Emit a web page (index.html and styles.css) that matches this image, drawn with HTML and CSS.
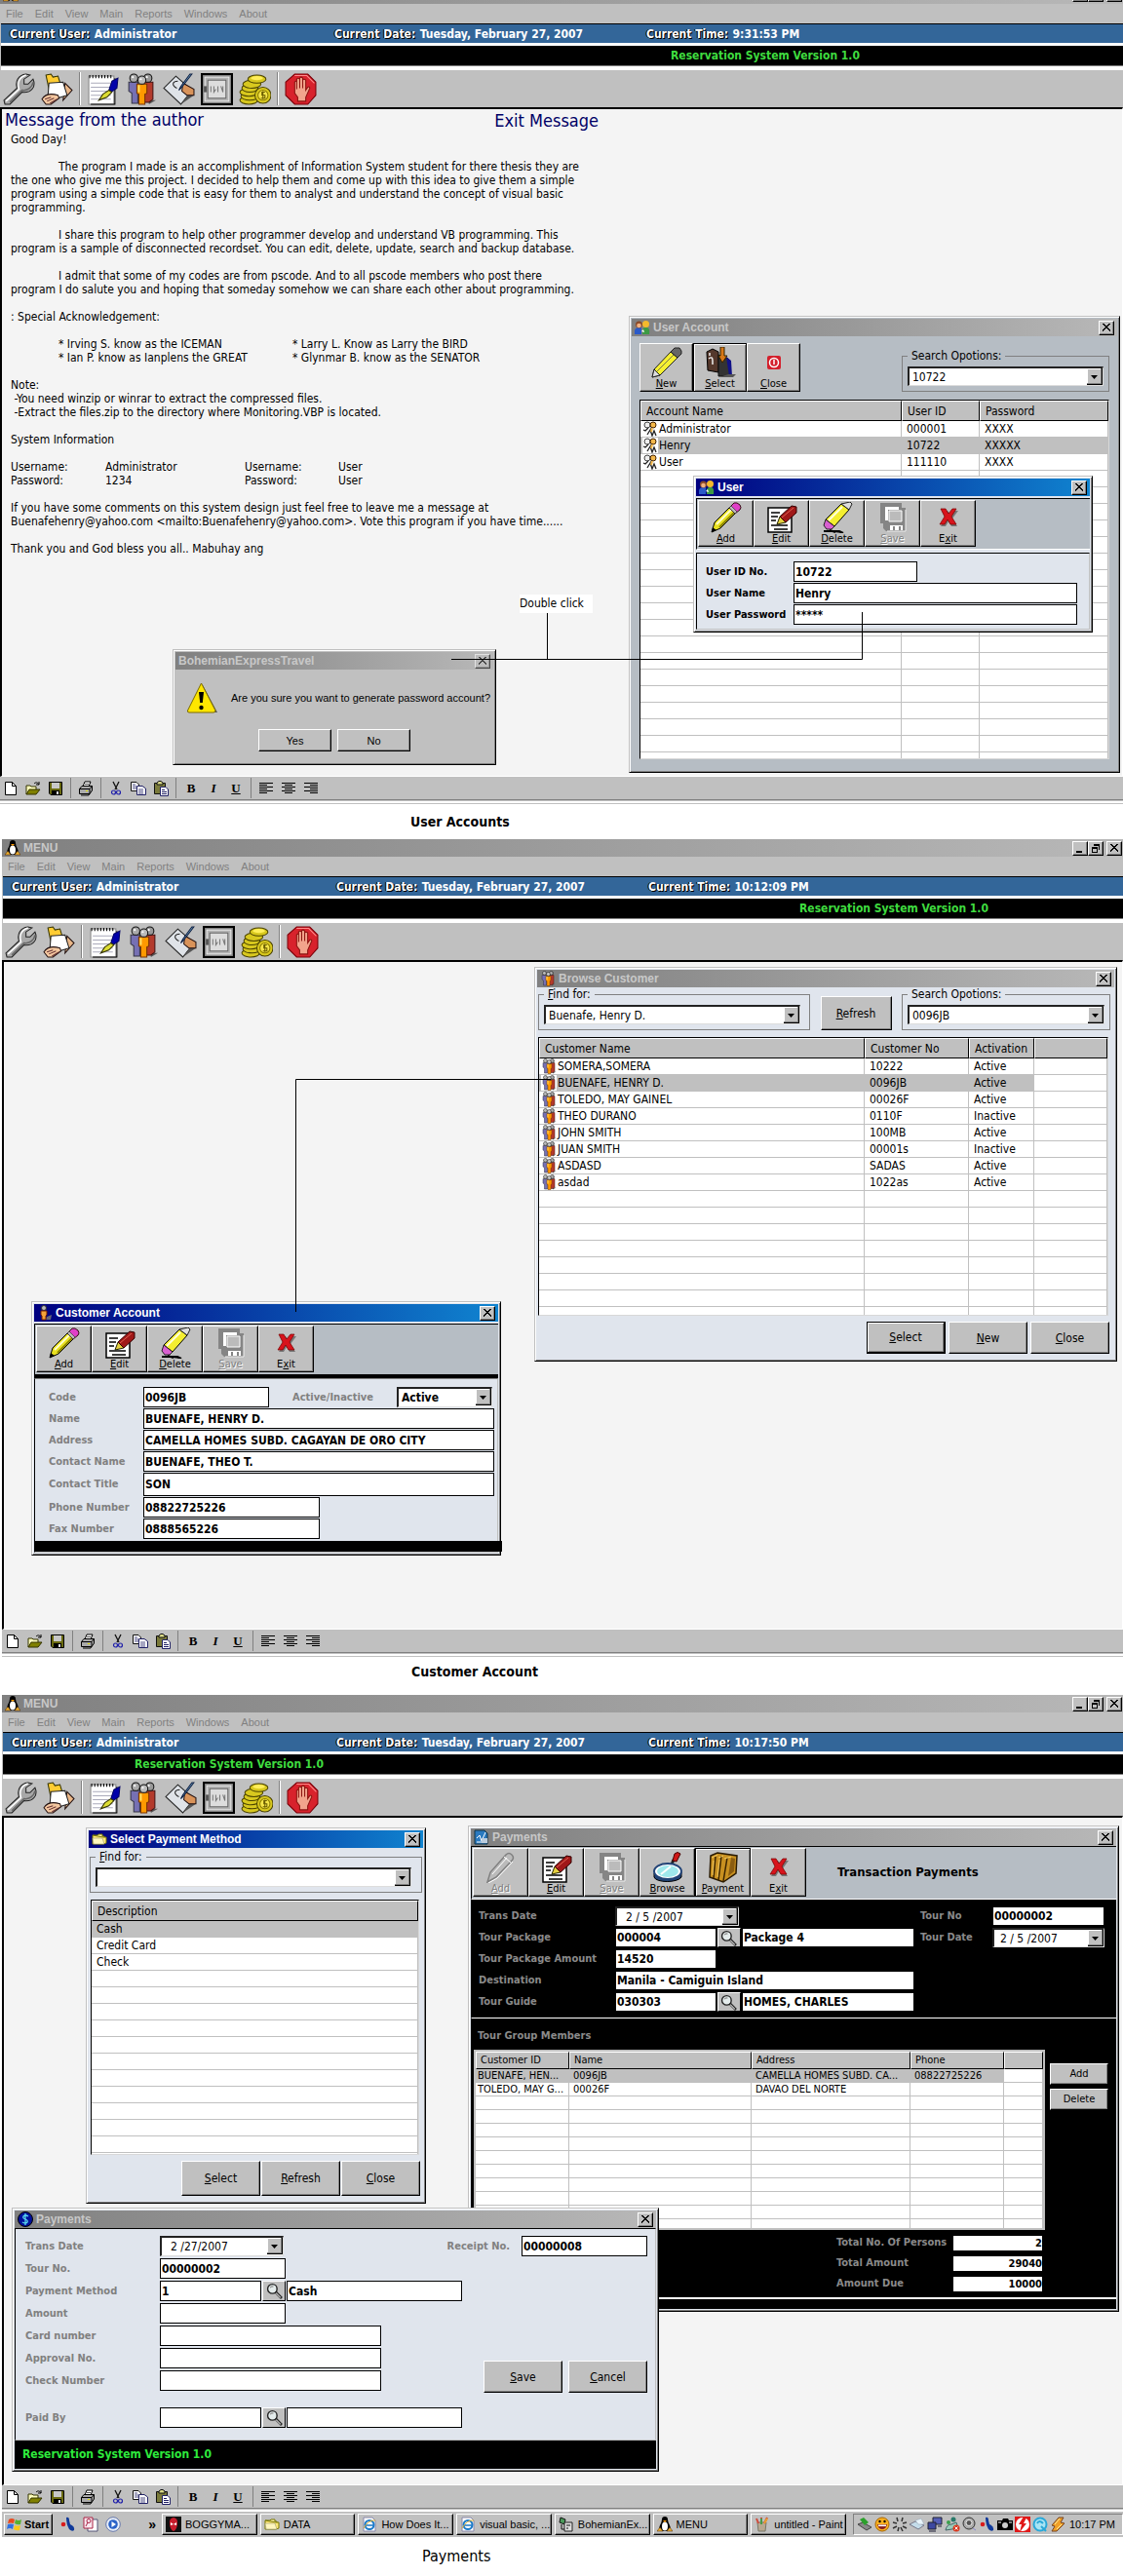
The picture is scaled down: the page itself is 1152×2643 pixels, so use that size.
FILE: index.html
```html
<!DOCTYPE html>
<html lang="en">
<head>
<meta charset="utf-8">
<title>Reservation System Version 1.0</title>
<link rel="stylesheet" href="styles.css">
</head>
<body>
<svg class="sprite" aria-hidden="true">
  <symbol id="i-wrench" viewBox="0 0 32 32"><path d="M2 31L1 27L14 15C12 8 15 2 23 1L27 2L21 6L21 11L25 11L30 6C33 13 29 20 19 19L7 31Z" fill="#a8a8a8" stroke="#222"/><path d="M3 28L16 16C14 9 17 4 23 2" fill="none" stroke="#fff" stroke-width="1.5"/><path d="M7 29L19 17C25 18 29 14 30 9" fill="none" stroke="#666" stroke-width="1.5"/></symbol>
  <symbol id="i-share" viewBox="0 0 32 32"><path d="M5 2L10 1L12 4L17 3L21 16L9 21Z" fill="#fc3" stroke="#330"/><path d="M24 10L31 17L22 27Z" fill="#eab788" stroke="#211"/><path d="M8 10L22 9L26 22L13 26L7 22Z" fill="#fff" stroke="#222"/><path d="M1 26C4 21 10 20 17 22L18 25L10 31H5Z" fill="#f5c8a0" stroke="#211"/><path d="M4 26L10 24M6 28L13 25M9 30L16 26" stroke="#633" fill="none"/></symbol>
  <symbol id="i-notes" viewBox="0 0 32 32"><path d="M2 3H27V31H2Z" fill="#fff" stroke="#888"/><path d="M28 5V31H4" fill="none" stroke="#000"/><path d="M3 2V5M6 2V5M9 2V5M12 2V5M15 2V5M18 2V5M21 2V5M24 2V5" stroke="#000"/><path d="M4 10H24M4 14H24M4 18H24M4 22H24M4 26H24" stroke="#aab"/><path d="M25 8L31 5L30 15L24 19L22 17Z" fill="#00a" stroke="#006"/><path d="M22 17L25 19L20 24L12 27L16 21Z" fill="#dd3" stroke="#330"/></symbol>
  <symbol id="i-people" viewBox="0 0 32 32"><path d="M24 27L31 27L24 31Z" fill="#555"/><path d="M4 9H13V30H7V20L4 18Z" fill="#7670b4" stroke="#334"/><path d="M19 9H28V26L24 29H19Z" fill="#b33a2c" stroke="#411"/><path d="M12 11H22V20L20 21V31H14V21L12 20Z" fill="#f90" stroke="#730"/><path d="M14 12V19" stroke="#fd6" stroke-width="2"/><circle cx="9" cy="5" r="4" fill="#aaa" stroke="#111"/><circle cx="23" cy="5" r="4" fill="#999" stroke="#111"/><circle cx="17" cy="7" r="4" fill="#bbb" stroke="#111"/><circle cx="8" cy="4" r="1" fill="#fff"/><circle cx="16" cy="6" r="1" fill="#fff"/><circle cx="22" cy="4" r="1" fill="#fff"/></symbol>
  <symbol id="i-write" viewBox="0 0 32 32"><path d="M13 3L29 17L18 31L1 15Z" fill="#dfe3e8" stroke="#222"/><path d="M18 31L31 22L29 17Z" fill="#555"/><path d="M15 8C10 8 8 12 14 15" stroke="#222" fill="none"/><path d="M20 10L31 16V22H24L19 18Z" fill="#d9935a" stroke="#211"/><path d="M29 1L19 14L16 17L18 13L27 1Z" fill="#6fa0c8" stroke="#124"/></symbol>
  <symbol id="i-safe" viewBox="0 0 32 32"><rect x="1" y="1" width="30" height="30" fill="#8d8d8d" stroke="#000" stroke-width="2"/><rect x="4" y="4" width="24" height="24" fill="#b4b4b4" stroke="#eee"/><rect x="7" y="7" width="18" height="18" fill="#ddd" stroke="#666"/><path d="M3 13H6V19H3Z" fill="#555"/><path d="M10 13V19M13 13V19L15 16M17 13V19M20 13L22 19V13" stroke="#777" fill="none"/></symbol>
  <symbol id="i-coins" viewBox="0 0 32 32"><g fill="#d8c81e" stroke="#4a4200"><ellipse cx="10" cy="27" rx="9" ry="4"/><ellipse cx="11" cy="23" rx="9" ry="4"/><ellipse cx="10" cy="19" rx="9" ry="4"/><ellipse cx="11" cy="15" rx="8" ry="4"/><ellipse cx="13" cy="11" rx="9" ry="4"/><ellipse cx="18" cy="6" rx="9" ry="4"/><circle cx="24" cy="22" r="8"/></g><ellipse cx="18" cy="5" rx="6" ry="2" fill="#ffee5a"/><circle cx="24" cy="22" r="5" fill="#f5e54a" stroke="#8a7a00"/><path d="M26 19H23V22H26V25H22M24 18V26" stroke="#6a5c00" fill="none"/></symbol>
  <symbol id="i-stop" viewBox="0 0 32 32"><path d="M10 1H23L31 9V22L23 31H10L1 22V9Z" fill="#d8222c" stroke="#7a0008"/><path d="M10 2.500H22L29.500 10" fill="none" stroke="#f88"/><path d="M10 18V9Q11 7 12 9V16V6Q13 4 15 6V15V5Q16 3 18 5V15V7Q19 5 21 7V17L23 14Q25 13 25 15L21 24V28H13V24L10 20Z" fill="#f2a48c" stroke="#8a1410"/></symbol>

  <symbol id="i-new" viewBox="0 0 16 16"><path d="M2.500 1.500H9.500L13.500 5.500V14.500H2.500Z" fill="#fff" stroke="#000"/><path d="M9.500 1.500V5.500H13.500" fill="none" stroke="#000"/></symbol>
  <symbol id="i-open" viewBox="0 0 16 16"><path d="M1 14V5H5L6 6H11V9" fill="#ffb" stroke="#330"/><path d="M1 14L4 9H15L11 14Z" fill="#808000" stroke="#330"/><path d="M9 3C11 1 13 2 14 4M14 1V4H11" fill="none" stroke="#000"/></symbol>
  <symbol id="i-save" viewBox="0 0 16 16"><path d="M1.500 1.500H14.500V14.500H3L1.500 13Z" fill="#6a6a10" stroke="#000"/><path d="M4 2H12V8H4Z" fill="#c8c8c8"/><path d="M4 10H12V14H4Z" fill="#000"/><path d="M9 11H11V14H9Z" fill="#ddd"/></symbol>
  <symbol id="i-print" viewBox="0 0 16 16"><path d="M5 6L7 1H13L11 6" fill="#fff" stroke="#000"/><path d="M1.500 8.500L4 5.500H14.500V10L12 13.500H1.500Z" fill="#aaa" stroke="#000"/><path d="M1.500 8.500H12V13.500M12 8.500L14.500 5.500M3 15H11L12 13" fill="none" stroke="#000"/><path d="M7 3.500H11" stroke="#555"/><path d="M8 10.500H10" stroke="#dd0"/></symbol>
  <symbol id="i-cut" viewBox="0 0 16 16"><path d="M5 1L9 9M11 1L7 9" stroke="#111" stroke-width="1.300"/><circle cx="5.500" cy="12" r="2" fill="none" stroke="#22a" stroke-width="1.200"/><circle cx="10.500" cy="12" r="2" fill="none" stroke="#22a" stroke-width="1.200"/></symbol>
  <symbol id="i-copy" viewBox="0 0 16 16"><path d="M.5 1.500H6L8.500 4V10.500H.5Z" fill="#fff" stroke="#111"/><path d="M6.500 5.500H12L15.500 8V14.500H6.500Z" fill="#fff" stroke="#226"/><path d="M2 4H5M2 6H6M2 8H6M8 9H13M8 11H13M8 13H13" stroke="#226" stroke-width=".8"/></symbol>
  <symbol id="i-paste" viewBox="0 0 16 16"><path d="M1.500 2.500H12.500V13.500H1.500Z" fill="#7a7a3a" stroke="#111"/><path d="M4 4V2L6 .5H8L10 2V4Z" fill="#dd8" stroke="#111"/><path d="M7.500 6.500H13L15.500 9V15.500H7.500Z" fill="#fff" stroke="#226"/><path d="M9 9.500H12M9 11.500H14M9 13.500H14" stroke="#226"/></symbol>
  <symbol id="i-left" viewBox="0 0 16 16"><path d="M1 2.500H15M1 4.500H9M1 6.500H15M1 8.500H9M1 10.500H15M1 12.500H9" stroke="#000"/></symbol>
  <symbol id="i-center" viewBox="0 0 16 16"><path d="M1 2.500H15M4 4.500H12M1 6.500H15M4 8.500H12M1 10.500H15M4 12.500H12" stroke="#000"/></symbol>
  <symbol id="i-right" viewBox="0 0 16 16"><path d="M1 2.500H15M7 4.500H15M1 6.500H15M7 8.500H15M1 10.500H15M7 12.500H15" stroke="#000"/></symbol>

  <symbol id="i-pencil" viewBox="0 0 32 32"><path d="M1 31L4 21L21 4L27 10L10 27Z" fill="#e8e020" stroke="#000"/><path d="M6 23L22 7" stroke="#ffc" stroke-width="2"/><path d="M9 26L25 10" stroke="#8a8400" stroke-width="2"/><path d="M19 6L24 1Q27 0 30 3Q32 6 30 8L25 12Z" fill="#e040c8" stroke="#311"/><path d="M19 6L25 12L27 10L21 4Z" fill="#bbb" stroke="#222" stroke-width=".6"/><path d="M1 31L2 26L6 29Z" fill="#000"/></symbol>
  <symbol id="i-pencil2" viewBox="0 0 32 32"><path d="M1 31L3 23L20 5L27 11L9 29Z" fill="#f6f032" stroke="#222"/><path d="M3 23L9 29L1 31Z" fill="#ddd" stroke="#222"/><path d="M6 25L23 8" stroke="#555" stroke-width=".8"/><path d="M20 5L24 1H29L31 4V7L27 11Z" fill="#666" stroke="#222"/></symbol>
  <symbol id="i-pencil-off" viewBox="0 0 32 32"><path d="M2 31L5 21L21 3Q24 0 27 3Q30 6 27 9L11 26Z" fill="#bbb" stroke="#808080" stroke-width="1.500"/><path d="M3 32L12 27L28 10M7 23L22 6M19 5L26 11" fill="none" stroke="#fff"/></symbol>
  <symbol id="i-edit" viewBox="0 0 32 32"><path d="M2 6H26V31H2Z" fill="#fff" stroke="#000" stroke-width="1.500"/><path d="M5 11H14M5 15H12M5 19H10M5 24H22M8 28H22" stroke="#000" stroke-width="1.300"/><path d="M11 23L14 15L20 21Z" fill="#e5d040" stroke="#220"/><path d="M14 15L26 4L31 5V11L20 21Z" fill="#a01818" stroke="#300"/><path d="M16 16L28 6" stroke="#e06050"/></symbol>
  <symbol id="i-eraser" viewBox="0 0 32 32"><path d="M4 18L20 2L28 8L13 25Z" fill="#f4ee30" stroke="#000"/><path d="M7 19L21 5" stroke="#ffd" stroke-width="2"/><path d="M20 2L29 0L31 2L28 8Z" fill="#ddd" stroke="#222"/><path d="M4 18L13 25L10 28H5L2 24Z" fill="#d860d0" stroke="#222"/><path d="M2 30H18L22 32M8 29L14 31" stroke="#000" stroke-width="2"/></symbol>
  <symbol id="i-save-off" viewBox="0 0 32 32"><path d="M3 1H25V6H29V30H9L6 27V22H3Z" fill="#858585"/><path d="M8 5H22V8H11V19H8Z" fill="#fff"/><path d="M12 9H25V20H12Z" fill="#bbb" stroke="#fff"/><path d="M13 24H26V29H13Z" fill="#fff"/><path d="M16 25H18V29H16ZM22 25H24V29H22Z" fill="#858585"/><path d="M29 8V30H10" stroke="#eee" fill="none"/></symbol>
  <symbol id="i-exit" viewBox="0 0 32 32"><path d="M9 9H15L18 13L21 9H26L20 17L25 25H19L16 20L13 25H8L13 17Z" fill="#777"/><path d="M8 7H13L16 12L20 7H24L19 15L24 23H18L15 18L12 23H7L12 15Z" fill="#d8141c" stroke="#700" stroke-width=".7"/></symbol>
  <symbol id="i-browse" viewBox="0 0 32 32"><path d="M20 13L22 8" stroke="#222" stroke-width="3"/><path d="M21 9L23 2Q26 -1 29 2L25 10Z" fill="#d01818" stroke="#400"/><path d="M2 22V26C4 32 26 32 30 26V21Z" fill="#247" stroke="#000"/><ellipse cx="16" cy="20" rx="14" ry="8" fill="#fff" stroke="#247" stroke-width="2"/><ellipse cx="16" cy="20" rx="11" ry="6" fill="#9fe8ec"/><path d="M9 23L19 15" stroke="#fff" stroke-width="2"/></symbol>
  <symbol id="i-folders" viewBox="0 0 32 32"><path d="M3 4L10 1L30 4L29 22L16 31L2 26Z" fill="#c89020" stroke="#2a1a00" stroke-width="1.500"/><path d="M8 5L6 27M14 4L11 29M20 6L16 30" stroke="#3a2400" stroke-width="1.500"/><path d="M4 6L10 3M11 6L16 4M17 7L24 5M6 9L5 24M12 8L10 26" stroke="#f0c860"/><path d="M24 6L28 7L27 20L21 25Z" fill="#8a5c10"/></symbol>
  <symbol id="i-tower" viewBox="0 0 32 32"><path d="M2 5L8 2L14 5V26L3 24Z" fill="#54382c" stroke="#000"/><path d="M14 8L24 12L27 30H14Z" fill="#333" stroke="#111"/><path d="M22 10L27 14L28 30H25Z" fill="#118"/><path d="M24 28L32 28L29 31H15Z" fill="#555"/><path d="M16 0H20V9H23L18 16L14 9H16Z" fill="#d87818" stroke="#320"/><path d="M4 12Q8 9 8 14V18M5 6V9" fill="none" stroke="#eee" stroke-width="1.500"/></symbol>
  <symbol id="i-power" viewBox="0 0 32 32"><rect x="9" y="9" width="14" height="14" rx="2" fill="#d4202c"/><circle cx="16" cy="16" r="4.500" fill="none" stroke="#fff" stroke-width="1.500"/><path d="M16 13V18" stroke="#fff" stroke-width="1.500"/></symbol>
  <symbol id="i-find" viewBox="0 0 16 16"><circle cx="6" cy="6" r="4.500" fill="#e4ecec" stroke="#222" stroke-width="1.300"/><path d="M4 5Q5 3 7 4" stroke="#888" fill="none"/><path d="M9 9L15 15" stroke="#222" stroke-width="2.500"/><path d="M9.500 10L14 14.500" stroke="#ccc"/></symbol>
  <symbol id="i-warn" viewBox="0 0 32 32"><path d="M17 3L32 31H4Z" fill="#555"/><path d="M15.500 1L30 29Q30 31 28 31H3Q1 31 1.500 29Z" fill="#ffe600" stroke="#7a6a00"/><path d="M13 10H18L16.800 21H14.200Z" fill="#000"/><circle cx="15.500" cy="26" r="2.200" fill="#000"/></symbol>

  <symbol id="i-tux" viewBox="0 0 16 16"><path d="M5 3Q5 0 8 0Q11 0 11 3Q11 5 13 9Q15 13 12 15H4Q1 13 3 9Q5 5 5 3Z" fill="#000"/><ellipse cx="8" cy="10" rx="3" ry="4.500" fill="#fff"/><path d="M6 4H10L8 6Z" fill="#f90"/><path d="M0 15L3 11L6 15ZM10 15L13 11L16 15Z" fill="#f0b030" stroke="#420" stroke-width=".5"/></symbol>
  <symbol id="i-users" viewBox="0 0 16 16"><path d="M0 15V11Q1 8 4 8H7V15Z" fill="#2a5ac8"/><path d="M8 15V10Q10 7 13 8Q16 9 15 15Z" fill="#3c9a44"/><circle cx="4.500" cy="5" r="3.500" fill="#8a4a28"/><circle cx="4.500" cy="6" r="2.300" fill="#f0b080"/><circle cx="11.500" cy="4.500" r="3.500" fill="#f4b92c"/><path d="M7 12L9 10L10 13Z" fill="#fff"/></symbol>
  <symbol id="i-keys" viewBox="0 0 16 16"><circle cx="5" cy="4" r="3" fill="#eee" stroke="#444"/><circle cx="11" cy="4" r="3" fill="#f4b84a" stroke="#420"/><path d="M10 6L8 9L10 15L12 10L14 15M6 7L3 10L1 9M8 9L5 14" stroke="#222" fill="none" stroke-width="1.300"/><path d="M10 7L9 11" stroke="#f4b84a" stroke-width="2"/></symbol>
  <symbol id="i-folder" viewBox="0 0 16 16"><path d="M1 4H6L7 3H11V5H13V9" fill="#fff3a8" stroke="#770"/><path d="M1 4V13H12L15 12V6L12 6Z" fill="#ffe97a" stroke="#770"/><path d="M1 7H11L13 13H2Z" fill="#fff6bd" stroke="#997" stroke-width=".6"/></symbol>
  <symbol id="i-man" viewBox="0 0 16 16"><path d="M10 12L15 10L14 15H9Z" fill="#667"/><circle cx="7" cy="3" r="2.500" fill="#bbb" stroke="#333"/><path d="M4 6H10V10L9 11V15H5V11L4 10Z" fill="#f4a23a" stroke="#720"/></symbol>
  <symbol id="i-doc" viewBox="0 0 16 16"><path d="M1 1H11L14 4V15H1Z" fill="#2a7ac0" stroke="#134"/><path d="M3 9L6 6L8 12L12 3M3 13H13" stroke="#fff" fill="none"/><path d="M8 9H14V14H8Z" fill="#bcd"/></symbol>
  <symbol id="i-dollar" viewBox="0 0 16 16"><circle cx="8" cy="8" r="7.500" fill="#00109a" stroke="#000"/><path d="M11 5Q8 3 6 5Q5 7 8 8Q11 9 10 11Q8 13 5 11M8 2V14" fill="none" stroke="#5ad8f0" stroke-width="1.300"/></symbol>
  <symbol id="i-flag" viewBox="0 0 16 16"><path d="M2 3Q5 1 8 3L7 7Q4 6 1 7Z" fill="#e84a20"/><path d="M9 3Q12 5 15 3L14 8Q11 9 8 7Z" fill="#58b030"/><path d="M1 8Q4 7 7 8L6 13Q3 11 0 13Z" fill="#3070e0"/><path d="M8 9Q11 10 14 9L13 14Q10 15 7 13Z" fill="#f8c818"/></symbol>
  <symbol id="i-yahoo" viewBox="0 0 16 16"><circle cx="3" cy="8" r="2.300" fill="#d81c1c"/><path d="M6 1Q9 0 9 4L10 8Q15 10 14 14Q12 16 9 13Q6 8 6 1Z" fill="#103a9a"/></symbol>
  <symbol id="i-access" viewBox="0 0 16 16"><path d="M5 3H15V15H5Z" fill="#fff" stroke="#557"/><path d="M1 1H10V12H1Z" fill="#f8e8f0" stroke="#a24"/><circle cx="6" cy="4.500" r="2" fill="none" stroke="#a24"/><path d="M5 6L3 10" stroke="#a24"/></symbol>
  <symbol id="i-media" viewBox="0 0 16 16"><circle cx="8" cy="8" r="7.300" fill="#e8eef8" stroke="#67a"/><circle cx="8" cy="8" r="4.800" fill="#2a62c8"/><path d="M6.500 5L11 8L6.500 11Z" fill="#fff"/></symbol>
  <symbol id="i-mask" viewBox="0 0 16 16"><path d="M0 0H16V16H0Z" fill="#111"/><path d="M8 1Q13 2 12 8Q11 14 8 15Q5 14 4 8Q3 2 8 1Z" fill="#c81c2c"/><path d="M5 6L8 8L5 9ZM11 6L8 8L11 9Z" fill="#fff"/></symbol>
  <symbol id="i-ie" viewBox="0 0 16 16"><path d="M2 1H11L14 4V15H2Z" fill="#fff" stroke="#88a"/><circle cx="8" cy="8.500" r="4.500" fill="none" stroke="#1a7ac8" stroke-width="2"/><path d="M4 9H12" stroke="#1a7ac8" stroke-width="1.500"/><path d="M2 12Q7 3 14 4" fill="none" stroke="#e0b030"/></symbol>
  <symbol id="i-app" viewBox="0 0 16 16"><path d="M2 1L7 3L6 8L1 6Z" fill="#4a9a5a" stroke="#111"/><path d="M6 6H14V15H6Z" fill="#ddd" stroke="#222"/><path d="M8 9H12M8 12H10M3 8V13H6" stroke="#111" fill="none"/></symbol>
  <symbol id="i-paint" viewBox="0 0 16 16"><path d="M3 6H12L11 15H4Z" fill="#b8a890" stroke="#776"/><path d="M4 7L2 2M7 7V1M10 7L13 1" stroke-width="2" stroke="#d04a3a"/><path d="M7 8V2" stroke="#4a9a4a" stroke-width="2"/><path d="M10 7L13 2" stroke="#e8a030" stroke-width="2"/></symbol>
  <symbol id="t-eject" viewBox="0 0 16 16"><path d="M1 8L10 14L15 11L6 6Z" fill="#888" stroke="#444"/><path d="M7 1L12 6L8 9L3 3Z" fill="#2ca02c"/></symbol>
  <symbol id="t-smile" viewBox="0 0 16 16"><circle cx="8" cy="8" r="7" fill="#f8b020" stroke="#a60"/><path d="M3 8H13Q12 13 8 13Q4 13 3 8Z" fill="#822"/><path d="M4 8.500H12V10H4Z" fill="#fff"/><circle cx="5.500" cy="5" r="1.200"/><circle cx="10.500" cy="5" r="1.200"/></symbol>
  <symbol id="t-burst" viewBox="0 0 16 16"><path d="M5 1L6 5M11 1L10 5M1 6L5 7M15 6L11 7M1 12L5 10M15 12L11 10M6 15L7 11M11 15L9 11" stroke="#333" stroke-width="1.500"/></symbol>
  <symbol id="t-disk" viewBox="0 0 16 16"><path d="M0 8L6 5L15 9L9 13Z" fill="#c4dcea" stroke="#778"/><path d="M6 4L12 2L15 8L9 8Z" fill="#e8f4fa" stroke="#9ab" stroke-width=".6"/></symbol>
  <symbol id="t-net" viewBox="0 0 16 16"><path d="M6 1H15V8H6Z" fill="#5560b8" stroke="#223"/><path d="M1 6H9V13H1Z" fill="#3c48a0" stroke="#223"/><path d="M2 15H9M11 10H15" stroke="#556" stroke-width="1.500"/></symbol>
  <symbol id="t-msn" viewBox="0 0 16 16"><circle cx="9" cy="3" r="2.500" fill="#2a7a6a"/><circle cx="4" cy="6" r="2" fill="#38a04a"/><path d="M1 14Q2 8 7 8L12 6L14 12Z" fill="#9cb" stroke="#466"/><circle cx="12" cy="12" r="3.500" fill="#d83a20"/><path d="M10.500 10.500L13.500 13.500M13.500 10.500L10.500 13.500" stroke="#fff"/></symbol>
  <symbol id="t-vol" viewBox="0 0 16 16"><circle cx="7" cy="7" r="6" fill="#aaa" stroke="#333"/><circle cx="7" cy="6.500" r="3" fill="#555" stroke="#eee"/><path d="M11 12L14 14" stroke="#88c"/></symbol>
  <symbol id="t-cam" viewBox="0 0 16 16"><path d="M0 4H5L6 2H11L12 4H16V14H0Z" fill="#000"/><circle cx="8" cy="9" r="3" fill="#ccc"/><path d="M1 6H4M12 6H15" stroke="#fff"/></symbol>
  <symbol id="t-bolt" viewBox="0 0 16 16"><path d="M0 0H16V16H0Z" fill="#e01818"/><circle cx="8" cy="8" r="7" fill="#fff"/><path d="M9 0L4 8H7L5 16L12 7H9L12 1Z" fill="#e01818"/></symbol>
  <symbol id="t-q" viewBox="0 0 16 16"><circle cx="8" cy="8" r="6.500" fill="#a8e4f4" stroke="#2aa8d8" stroke-width="2"/><path d="M5 7Q7 3 11 7M9 10L14 15" stroke="#2aa8d8" stroke-width="2" fill="none"/></symbol>
  <symbol id="t-amp" viewBox="0 0 16 16"><path d="M2 9L9 1H14L11 6L15 7L7 15H2L5 10Z" fill="#f0a028" stroke="#742"/><path d="M10 2L5 8M12 8L7 13" stroke="#fe9"/></symbol>
</svg>

<figure class="shot shot-first">
  <main class="app">
    <header class="titlebar main-title cropped"><svg class="ic16"><use href="#i-tux"/></svg><button class="min" aria-label="Minimize"></button><button class="restore" aria-label="Restore"></button><button class="close" aria-label="Close"></button></header>
    <nav class="menubar"><a href="#">File</a><a href="#">Edit</a><a href="#">View</a><a href="#">Main</a><a href="#">Reports</a><a href="#">Windows</a><a href="#">About</a></nav>
    <div class="status"><p><b>Current User:</b> <strong>Administrator</strong></p><p><b>Current Date:</b> <strong>Tuesday, February 27, 2007</strong></p><p><b>Current Time:</b> <strong>9:31:53 PM</strong></p></div>
    <div class="ticker tick-a">Reservation System Version 1.0</div>
    <div class="toolbar">
      <button aria-label="Settings"><svg><use href="#i-wrench"/></svg></button><button aria-label="Share files"><svg><use href="#i-share"/></svg></button><i></i>
      <button aria-label="Notes"><svg><use href="#i-notes"/></svg></button><button aria-label="Customers"><svg><use href="#i-people"/></svg></button><button aria-label="Reservation"><svg><use href="#i-write"/></svg></button><button aria-label="Safe"><svg><use href="#i-safe"/></svg></button><button aria-label="Payments"><svg><use href="#i-coins"/></svg></button><i></i>
      <button aria-label="Exit"><svg><use href="#i-stop"/></svg></button>
    </div>
    <div class="desktop">
      <article class="message">
        <header><h1>Message from the author</h1><button>Exit Message</button></header>
        <div class="letter">
          <p>Good Day!</p>
          <p class="para">The program I made is an accomplishment of Information System student for there thesis they are<br>the one who give me this project. I decided to help them and come up with this idea to give them a simple<br>program using a simple code that is easy for them to analyst and understand the concept of visual basic<br>programming.</p>
          <p class="para">I share this program to help other programmer develop and understand VB programming. This<br>program is a sample of disconnected recordset. You can edit, delete, update, search and backup database.</p>
          <p class="para">I admit that some of my codes are from pscode. And to all pscode members who post there<br>program I do salute you and hoping that someday somehow we can share each other about programming.</p>
          <p>: Special Acknowledgement:</p>
          <div class="ack"><span>* Irving S. know as the ICEMAN</span><span>* Larry L. Know as Larry the BIRD</span><span>* Ian P. know as Ianplens the GREAT</span><span>* Glynmar B. know as the SENATOR</span></div>
          <p>Note:<br>&nbsp;-You need winzip or winrar to extract the compressed files.<br>&nbsp;-Extract the files.zip to the directory where Monitoring.VBP is located.</p>
          <p>System Information</p>
          <div class="logins"><span>Username:</span><span>Administrator</span><span>Username:</span><span>User</span><span>Password:</span><span>1234</span><span>Password:</span><span>User</span></div>
          <p>If you have some comments on this system design just feel free to leave me a message at<br>Buenafehenry@yahoo.com &lt;mailto:Buenafehenry@yahoo.com&gt;. Vote this program if you have time......</p>
          <p>Thank you and God bless you all.. Mabuhay ang</p>
        </div>
      </article>

      <section class="window msgbox">
        <header class="titlebar"><h2>BohemianExpressTravel</h2><button class="close off" aria-label="Close"></button></header>
        <div class="msg-row"><svg class="ic32"><use href="#i-warn"/></svg><p>Are you sure you want to generate password account?</p></div>
        <div class="msg-buttons"><button class="btn">Yes</button><button class="btn">No</button></div>
      </section>

      <section class="window accounts">
        <header class="titlebar"><svg class="ic16"><use href="#i-users"/></svg><h2>User Account</h2><button class="close" aria-label="Close"></button></header>
        <div class="accounts-top">
          <div class="tools"><button><svg><use href="#i-pencil2"/></svg><span><u>N</u>ew</span></button><button class="focus"><svg><use href="#i-tower"/></svg><span><u>S</u>elect</span></button><button><svg><use href="#i-power"/></svg><span><u>C</u>lose</span></button></div>
          <fieldset class="search"><legend><label for="acc-search">Search Opotions:</label></legend><select id="acc-search"><option>10722</option></select></fieldset>
        </div>
        <div class="list accounts-list">
          <table><colgroup><col class="c-account"><col class="c-id"><col></colgroup>
            <thead><tr><th>Account Name</th><th>User ID</th><th>Password</th></tr></thead>
            <tbody>
              <tr><td><svg><use href="#i-keys"/></svg>Administrator</td><td>000001</td><td>XXXX</td></tr>
              <tr class="on"><td><svg><use href="#i-keys"/></svg>Henry</td><td>10722</td><td>XXXXX</td></tr>
              <tr><td><svg><use href="#i-keys"/></svg>User</td><td>111110</td><td>XXXX</td></tr>
              <tr class="filler"><td></td><td></td><td></td></tr>
            </tbody></table>
        </div>
      </section>

      <section class="window user">
        <header class="titlebar active"><svg class="ic16"><use href="#i-users"/></svg><h2>User</h2><button class="close" aria-label="Close"></button></header>
        <div class="tools strip"><button><svg><use href="#i-pencil"/></svg><span><u>A</u>dd</span></button><button><svg><use href="#i-edit"/></svg><span><u>E</u>dit</span></button><button><svg><use href="#i-eraser"/></svg><span><u>D</u>elete</span></button><button disabled><svg><use href="#i-save-off"/></svg><span><u>S</u>ave</span></button><button><svg><use href="#i-exit"/></svg><span>E<u>x</u>it</span></button></div>
        <form class="form user-form">
          <label for="u-id">User ID No.</label><input id="u-id" class="w-code" value="10722">
          <label for="u-name">User Name</label><input id="u-name" value="Henry">
          <label for="u-pass">User Password</label><input id="u-pass" value="*****">
        </form>
      </section>

      <span class="note">Double click</span>
      <svg class="wires"><path d="M559.500 517V564.500M461 564.500H882.500V516"/></svg>
    </div>
    <div class="formatbar">
      <button aria-label="New"><svg><use href="#i-new"/></svg></button><button aria-label="Open"><svg><use href="#i-open"/></svg></button><button aria-label="Save"><svg><use href="#i-save"/></svg></button><i></i><button aria-label="Print"><svg><use href="#i-print"/></svg></button><i></i><button aria-label="Cut"><svg><use href="#i-cut"/></svg></button><button aria-label="Copy"><svg><use href="#i-copy"/></svg></button><button aria-label="Paste"><svg><use href="#i-paste"/></svg></button><i></i><button><b>B</b></button><button><em>I</em></button><button><u>U</u></button><i></i><button aria-label="Align left"><svg><use href="#i-left"/></svg></button><button aria-label="Center"><svg><use href="#i-center"/></svg></button><button aria-label="Align right"><svg><use href="#i-right"/></svg></button>
    </div>
  </main>
  <figcaption>User Accounts</figcaption>
</figure>

<figure class="shot">
  <div class="app">
    <header class="titlebar main-title"><svg class="ic16"><use href="#i-tux"/></svg><h2>MENU</h2><button class="min" aria-label="Minimize"></button><button class="restore" aria-label="Restore"></button><button class="close" aria-label="Close"></button></header>
    <nav class="menubar"><a href="#">File</a><a href="#">Edit</a><a href="#">View</a><a href="#">Main</a><a href="#">Reports</a><a href="#">Windows</a><a href="#">About</a></nav>
    <div class="status"><p><b>Current User:</b> <strong>Administrator</strong></p><p><b>Current Date:</b> <strong>Tuesday, February 27, 2007</strong></p><p><b>Current Time:</b> <strong>10:12:09 PM</strong></p></div>
    <div class="ticker tick-b">Reservation System Version 1.0</div>
    <div class="toolbar">
      <button aria-label="Settings"><svg><use href="#i-wrench"/></svg></button><button aria-label="Share files"><svg><use href="#i-share"/></svg></button><i></i>
      <button aria-label="Notes"><svg><use href="#i-notes"/></svg></button><button aria-label="Customers"><svg><use href="#i-people"/></svg></button><button aria-label="Reservation"><svg><use href="#i-write"/></svg></button><button aria-label="Safe"><svg><use href="#i-safe"/></svg></button><button aria-label="Payments"><svg><use href="#i-coins"/></svg></button><i></i>
      <button aria-label="Exit"><svg><use href="#i-stop"/></svg></button>
    </div>
    <div class="desktop">
      <section class="window browse">
        <header class="titlebar"><svg class="ic16"><use href="#i-people"/></svg><h2>Browse Customer</h2><button class="close" aria-label="Close"></button></header>
        <div class="browse-top">
          <fieldset class="find"><legend><label for="b-find"><u>F</u>ind for:</label></legend><select id="b-find"><option>Buenafe, Henry D.</option></select></fieldset>
          <button class="btn refresh"><u>R</u>efresh</button>
          <fieldset class="search"><legend><label for="b-search">Search Opotions:</label></legend><select id="b-search"><option>0096JB</option></select></fieldset>
        </div>
        <div class="list browse-list">
          <table><colgroup><col class="c-customer"><col class="c-no"><col class="c-act"><col></colgroup>
            <thead><tr><th>Customer Name</th><th>Customer No</th><th>Activation</th><th></th></tr></thead>
            <tbody>
              <tr><td><svg><use href="#i-people"/></svg>SOMERA,SOMERA</td><td>10222</td><td>Active</td><td></td></tr>
              <tr class="on"><td><svg><use href="#i-people"/></svg>BUENAFE, HENRY D.</td><td>0096JB</td><td>Active</td><td class="blank"></td></tr>
              <tr><td><svg><use href="#i-people"/></svg>TOLEDO, MAY GAINEL</td><td>00026F</td><td>Active</td><td></td></tr>
              <tr><td><svg><use href="#i-people"/></svg>THEO DURANO</td><td>0110F</td><td>Inactive</td><td></td></tr>
              <tr><td><svg><use href="#i-people"/></svg>JOHN SMITH</td><td>100MB</td><td>Active</td><td></td></tr>
              <tr><td><svg><use href="#i-people"/></svg>JUAN SMITH</td><td>00001s</td><td>Inactive</td><td></td></tr>
              <tr><td><svg><use href="#i-people"/></svg>ASDASD</td><td>SADAS</td><td>Active</td><td></td></tr>
              <tr><td><svg><use href="#i-people"/></svg>asdad</td><td>1022as</td><td>Active</td><td></td></tr>
              <tr class="filler"><td></td><td></td><td></td><td></td></tr>
            </tbody></table>
        </div>
        <div class="actions"><button class="btn default"><u>S</u>elect</button><button class="btn"><u>N</u>ew</button><button class="btn"><u>C</u>lose</button></div>
      </section>

      <section class="window customer">
        <header class="titlebar active"><svg class="ic16"><use href="#i-man"/></svg><h2>Customer Account</h2><button class="close" aria-label="Close"></button></header>
        <div class="tools strip"><button><svg><use href="#i-pencil"/></svg><span><u>A</u>dd</span></button><button><svg><use href="#i-edit"/></svg><span><u>E</u>dit</span></button><button><svg><use href="#i-eraser"/></svg><span><u>D</u>elete</span></button><button disabled><svg><use href="#i-save-off"/></svg><span><u>S</u>ave</span></button><button><svg><use href="#i-exit"/></svg><span>E<u>x</u>it</span></button></div>
        <form class="form customer-form">
          <label for="c-code">Code</label><div class="pair"><input id="c-code" class="w-code" value="0096JB"><label for="c-active">Active/Inactive</label><select id="c-active"><option>Active</option></select></div>
          <label for="c-name">Name</label><input id="c-name" value="BUENAFE, HENRY D.">
          <label for="c-addr">Address</label><input id="c-addr" value="CAMELLA HOMES SUBD. CAGAYAN DE ORO CITY">
          <label for="c-contact">Contact Name</label><input id="c-contact" value="BUENAFE, THEO T.">
          <label for="c-title">Contact Title</label><input id="c-title" class="tall" value="SON">
          <label for="c-phone">Phone Number</label><input id="c-phone" class="w-phone" value="08822725226">
          <label for="c-fax">Fax Number</label><input id="c-fax" class="w-phone" value="0888565226">
        </form>
      </section>
      <svg class="wires"><path d="M561 120.500H299.500V359"/></svg>
    </div>
    <div class="formatbar">
      <button aria-label="New"><svg><use href="#i-new"/></svg></button><button aria-label="Open"><svg><use href="#i-open"/></svg></button><button aria-label="Save"><svg><use href="#i-save"/></svg></button><i></i><button aria-label="Print"><svg><use href="#i-print"/></svg></button><i></i><button aria-label="Cut"><svg><use href="#i-cut"/></svg></button><button aria-label="Copy"><svg><use href="#i-copy"/></svg></button><button aria-label="Paste"><svg><use href="#i-paste"/></svg></button><i></i><button><b>B</b></button><button><em>I</em></button><button><u>U</u></button><i></i><button aria-label="Align left"><svg><use href="#i-left"/></svg></button><button aria-label="Center"><svg><use href="#i-center"/></svg></button><button aria-label="Align right"><svg><use href="#i-right"/></svg></button>
    </div>
  </div>
  <figcaption class="low">Customer Account</figcaption>
</figure>

<figure class="shot">
  <div class="app">
    <header class="titlebar main-title"><svg class="ic16"><use href="#i-tux"/></svg><h2>MENU</h2><button class="min" aria-label="Minimize"></button><button class="restore" aria-label="Restore"></button><button class="close" aria-label="Close"></button></header>
    <nav class="menubar"><a href="#">File</a><a href="#">Edit</a><a href="#">View</a><a href="#">Main</a><a href="#">Reports</a><a href="#">Windows</a><a href="#">About</a></nav>
    <div class="status"><p><b>Current User:</b> <strong>Administrator</strong></p><p><b>Current Date:</b> <strong>Tuesday, February 27, 2007</strong></p><p><b>Current Time:</b> <strong>10:17:50 PM</strong></p></div>
    <div class="ticker tick-c">Reservation System Version 1.0</div>
    <div class="toolbar">
      <button aria-label="Settings"><svg><use href="#i-wrench"/></svg></button><button aria-label="Share files"><svg><use href="#i-share"/></svg></button><i></i>
      <button aria-label="Notes"><svg><use href="#i-notes"/></svg></button><button aria-label="Customers"><svg><use href="#i-people"/></svg></button><button aria-label="Reservation"><svg><use href="#i-write"/></svg></button><button aria-label="Safe"><svg><use href="#i-safe"/></svg></button><button aria-label="Payments"><svg><use href="#i-coins"/></svg></button><i></i>
      <button aria-label="Exit"><svg><use href="#i-stop"/></svg></button>
    </div>
    <div class="desktop">
      <section class="window method">
        <header class="titlebar active"><svg class="ic16"><use href="#i-folder"/></svg><h2>Select Payment Method</h2><button class="close" aria-label="Close"></button></header>
        <fieldset class="find"><legend><label for="m-find"><u>F</u>ind for:</label></legend><select id="m-find"><option></option></select></fieldset>
        <div class="list method-list">
          <table>
            <thead><tr><th>Description</th></tr></thead>
            <tbody><tr class="on"><td>Cash</td></tr><tr><td>Credit Card</td></tr><tr><td>Check</td></tr><tr class="filler"><td></td></tr></tbody>
          </table>
        </div>
        <div class="actions"><button class="btn"><u>S</u>elect</button><button class="btn"><u>R</u>efresh</button><button class="btn"><u>C</u>lose</button></div>
      </section>

      <section class="window tour">
        <header class="titlebar"><svg class="ic16"><use href="#i-doc"/></svg><h2>Payments</h2><button class="close" aria-label="Close"></button></header>
        <div class="tools strip"><button disabled><svg><use href="#i-pencil-off"/></svg><span><u>A</u>dd</span></button><button><svg><use href="#i-edit"/></svg><span><u>E</u>dit</span></button><button disabled><svg><use href="#i-save-off"/></svg><span><u>S</u>ave</span></button><button><svg><use href="#i-browse"/></svg><span><u>B</u>rowse</span></button><button class="focus"><svg><use href="#i-folders"/></svg><span><u>P</u>ayment</span></button><button><svg><use href="#i-exit"/></svg><span>E<u>x</u>it</span></button><h3>Transaction Payments</h3></div>
        <form class="dark tour-form">
          <div class="form">
            <label for="t-date">Trans Date</label><select id="t-date" class="date"><option>2 / 5 /2007</option></select>
            <label for="t-pack">Tour Package</label><div class="pair"><input id="t-pack" class="w-short" value="000004"><button type="button" class="look" aria-label="Find package"><svg><use href="#i-find"/></svg></button><input class="w-name" aria-label="Package name" value="Package 4"></div>
            <label for="t-amt">Tour Package Amount</label><input id="t-amt" class="w-short" value="14520">
            <label for="t-dest">Destination</label><input id="t-dest" value="Manila - Camiguin Island">
            <label for="t-guide">Tour Guide</label><div class="pair"><input id="t-guide" class="w-short" value="030303"><button type="button" class="look" aria-label="Find guide"><svg><use href="#i-find"/></svg></button><input class="w-name" aria-label="Guide name" value="HOMES, CHARLES"></div>
          </div>
          <div class="form side">
            <label for="t-no">Tour No</label><input id="t-no" value="00000002">
            <label for="t-tdate">Tour Date</label><select id="t-tdate" class="date"><option>2 / 5 /2007</option></select>
          </div>
        </form>
        <div class="dark members">
          <h3>Tour Group Members</h3>
          <div class="members-row">
            <div class="list members-list">
              <table><colgroup><col class="c-cid"><col class="c-name"><col class="c-addr"><col class="c-phone"><col></colgroup>
                <thead><tr><th>Customer ID</th><th>Name</th><th>Address</th><th>Phone</th><th></th></tr></thead>
                <tbody>
                  <tr class="on"><td>BUENAFE, HEN...</td><td>0096JB</td><td>CAMELLA HOMES SUBD. CA...</td><td>08822725226</td><td class="blank"></td></tr>
                  <tr><td>TOLEDO, MAY G...</td><td>00026F</td><td>DAVAO DEL NORTE</td><td></td><td></td></tr>
                  <tr class="filler"><td></td><td></td><td></td><td></td><td></td></tr>
                </tbody></table>
            </div>
            <div class="members-buttons"><button class="btn">Add</button><button class="btn">Delete</button></div>
          </div>
          <form class="totals">
            <label for="n-p">Total No. Of Persons</label><input id="n-p" value="2">
            <label for="n-t">Total Amount</label><input id="n-t" value="29040">
            <label for="n-d">Amount Due</label><input id="n-d" value="10000">
          </form>
        </div>
        <div class="dark foot"></div>
      </section>

      <section class="window payment">
        <header class="titlebar"><svg class="ic16"><use href="#i-dollar"/></svg><h2>Payments</h2><button class="close" aria-label="Close"></button></header>
        <form class="payment-form">
          <div class="form">
            <label for="p-date">Trans Date</label><select id="p-date" class="date"><option>2 /27/2007</option></select>
            <label for="p-tour">Tour No.</label><input id="p-tour" class="w-code" value="00000002">
            <label for="p-meth">Payment Method</label><div class="pair"><input id="p-meth" class="w-short" value="1"><button type="button" class="look" aria-label="Find method"><svg><use href="#i-find"/></svg></button><input class="w-name" aria-label="Method name" value="Cash"></div>
            <label for="p-amt">Amount</label><input id="p-amt" class="w-code">
            <label for="p-card">Card number</label><input id="p-card" class="w-card">
            <label for="p-appr">Approval No.</label><input id="p-appr" class="w-card">
            <label for="p-check">Check Number</label><input id="p-check" class="w-card">
            <label for="p-by" class="spaced">Paid By</label><div class="pair spaced"><input id="p-by" class="w-short"><button type="button" class="look" aria-label="Find payer"><svg><use href="#i-find"/></svg></button><input class="w-name" aria-label="Payer name"></div>
          </div>
          <div class="payment-side">
            <p><label for="p-rec">Receipt No.</label><input id="p-rec" class="w-code" value="00000008"></p>
            <div class="actions"><button type="button" class="btn"><u>S</u>ave</button><button type="button" class="btn"><u>C</u>ancel</button></div>
          </div>
        </form>
        <footer>Reservation System Version 1.0</footer>
      </section>
    </div>
    <div class="formatbar">
      <button aria-label="New"><svg><use href="#i-new"/></svg></button><button aria-label="Open"><svg><use href="#i-open"/></svg></button><button aria-label="Save"><svg><use href="#i-save"/></svg></button><i></i><button aria-label="Print"><svg><use href="#i-print"/></svg></button><i></i><button aria-label="Cut"><svg><use href="#i-cut"/></svg></button><button aria-label="Copy"><svg><use href="#i-copy"/></svg></button><button aria-label="Paste"><svg><use href="#i-paste"/></svg></button><i></i><button><b>B</b></button><button><em>I</em></button><button><u>U</u></button><i></i><button aria-label="Align left"><svg><use href="#i-left"/></svg></button><button aria-label="Center"><svg><use href="#i-center"/></svg></button><button aria-label="Align right"><svg><use href="#i-right"/></svg></button>
    </div>
    <div class="taskbar">
      <button class="start"><svg><use href="#i-flag"/></svg>Start</button>
      <div class="quick"><button aria-label="Yahoo"><svg><use href="#i-yahoo"/></svg></button><button aria-label="Access"><svg><use href="#i-access"/></svg></button><button aria-label="Media Player"><svg><use href="#i-media"/></svg></button><span>»</span></div>
      <div class="tasks">
        <button><svg><use href="#i-mask"/></svg>BOGGYMA...</button><button><svg><use href="#i-folder"/></svg>DATA</button><button><svg><use href="#i-ie"/></svg>How Does It...</button><button><svg><use href="#i-ie"/></svg>visual basic, ...</button><button><svg><use href="#i-app"/></svg>BohemianEx...</button><button><svg><use href="#i-tux"/></svg>MENU</button><button><svg><use href="#i-paint"/></svg>untitled - Paint</button>
      </div>
      <div class="tray"><svg><use href="#t-eject"/></svg><svg><use href="#t-smile"/></svg><svg><use href="#t-burst"/></svg><svg><use href="#t-disk"/></svg><svg><use href="#t-net"/></svg><svg><use href="#t-msn"/></svg><svg><use href="#t-vol"/></svg><svg><use href="#i-yahoo"/></svg><svg><use href="#t-cam"/></svg><svg><use href="#t-bolt"/></svg><svg><use href="#t-q"/></svg><svg><use href="#t-amp"/></svg><span>10:17 PM</span></div>
    </div>
  </div>
  <figcaption class="last">Payments</figcaption>
</figure>
</body>
</html>
```
FILE: styles.css
```css
:root {
  --ui: "DejaVu Sans Condensed", "Liberation Sans", sans-serif;
  --sys: "Liberation Sans", sans-serif;
  --face: #c0c0c0;
  --shade: #808080;
  --form: #e0e5ed;
  --panel: #b6bdc4;
}
* { box-sizing: border-box; }
body { margin: 0; background: #fff; color: #000; font: 12px/14px var(--ui); }
p, h1, h2, h3, figure { margin: 0; }
button, input, select { margin: 0; font: inherit; color: inherit; border-radius: 0; }
button { padding: 0; border: 0; background: none; }
.sprite { display: none; }
svg { display: block; flex: none; }
.ic16 { width: 16px; height: 16px; }
.ic32 { width: 32px; height: 32px; }

/* one captioned screen */
.shot { padding-left: 2px; }
.shot-first { padding-left: 0; }
figcaption { padding-left: 420px; font-size: 14px; font-weight: bold; line-height: 36px; }
.shot-first figcaption { padding-left: 421px; }
figcaption.low { padding-bottom: 9px; line-height: 30px; }
figcaption.last { padding-left: 431px; line-height: 40px; font-size: 16px; font-weight: normal; }
.app { background: var(--face); }

/* title bars */
.titlebar { display: flex; align-items: center; gap: 3px; height: 18px; padding: 0 3px; color: #c8c8c8; background: linear-gradient(90deg, #808080, #b8b8b8); }
.titlebar.active { color: #fff; background: linear-gradient(90deg, #000080, #1084d0); }
.titlebar h2 { flex: 1; font: bold 12px/19px var(--sys); white-space: nowrap; }
.main-title { padding: 0 1px 0 3px; }
.main-title .min { margin-left: auto; }
.main-title .restore { margin-left: -3px; }
.cropped { align-items: flex-end; height: 4px; padding-bottom: 2px; overflow: hidden; }
.close, .min, .restore { position: relative; width: 16px; height: 15px; background: var(--face); border: 1px solid; border-color: #fff #000 #000 #fff; box-shadow: inset -1px -1px var(--shade); color: #000; }
.close { background: linear-gradient(45deg, transparent 44%, #000 44% 57%, transparent 57%) 3px 2px / 8px 8px no-repeat, linear-gradient(-45deg, transparent 44%, #000 44% 57%, transparent 57%) 3px 2px / 8px 8px no-repeat, var(--face); }
.close.off { opacity: .6; }
.min { background: linear-gradient(#000, #000) 3px 9px / 6px 2px no-repeat, var(--face); }
.restore { background: linear-gradient(#000, #000) 5px 2px / 6px 2px no-repeat, linear-gradient(#000, #000) 10px 3px / 1px 5px no-repeat, linear-gradient(#000, #000) 3px 5px / 6px 2px no-repeat, linear-gradient(#000, #000) 3px 6px / 1px 5px no-repeat, linear-gradient(#000, #000) 8px 6px / 1px 5px no-repeat, linear-gradient(#000, #000) 3px 10px / 6px 1px no-repeat, var(--face); }

/* main window bars */
.menubar { display: flex; gap: 12px; height: 20px; padding: 0 6px; font: 11px/20px var(--sys); }
.menubar a { color: var(--shade); text-decoration: none; }
.status { display: grid; grid-template-columns: 333px 320px 1fr; height: 20px; margin-left: 1px; padding-left: 9px; border-top: 1px solid #000; background: #336699; color: #fff; font-size: 12px; line-height: 20px; }
.status b { margin-right: 1px; text-shadow: -1px 0 #000, 1px 1px #000; }
.ticker { height: 28px; margin-left: 1px; border: solid #fff; border-width: 3px 0 4px; background: #000; color: #3fdc3f; font-weight: bold; line-height: 21px; box-shadow: inset 0 -1px var(--shade); }
.tick-a { padding-left: 687px; }
.tick-b { padding-left: 817px; }
.tick-c { padding-left: 135px; }
.toolbar { display: flex; align-items: center; gap: 6px; height: 38px; padding-left: 3px; }
.toolbar button, .toolbar svg { width: 33px; height: 33px; }
.toolbar i, .formatbar i { width: 2px; height: 34px; border-left: 1px solid var(--shade); border-right: 1px solid #fff; }
.desktop { position: relative; height: 687px; border: 2px solid; border-width: 2px 1px 1px 2px; border-color: #000 #fff #fff #000; background: #f4f4f4; overflow: hidden; }
.formatbar { display: flex; align-items: center; gap: 7px; height: 28px; padding: 0 3px 5px; background: linear-gradient(var(--shade), var(--shade)) 0 23px / 100% 1px no-repeat, linear-gradient(#fff, #fff) 0 25px / 100% 2px no-repeat, var(--face); }
.formatbar button, .formatbar svg { width: 16px; height: 16px; }
.formatbar button { font: bold 13px/16px "Liberation Serif", serif; }
.formatbar i { width: 1px; height: 21px; border-right: 0; }

/* letter from the author */
.message { width: 612px; white-space: nowrap; }
.message header { display: flex; justify-content: space-between; height: 24px; padding-left: 3px; color: #000066; font-size: 18px; line-height: 22px; }
.message h1 { font: inherit; }
.letter { display: grid; gap: 14px; padding-left: 9px; }
.para { text-indent: 49px; }
.ack { display: grid; grid-template-columns: 240px 1fr; padding-left: 49px; }
.logins { display: grid; grid-template-columns: 97px 143px 96px 1fr; }
.note { position: absolute; left: 531px; top: 498px; padding: 2px 9px 3px 0; background: #fff; }
.wires { position: absolute; inset: 0; width: 100%; height: 100%; pointer-events: none; }
.wires path { fill: none; stroke: #000; }

/* child windows */
.window { position: absolute; padding: 2px; border: 1px solid; border-color: var(--face) #000 #000 var(--face); box-shadow: inset 1px 1px #fff, inset -1px -1px var(--shade); background: var(--form); }
.btn { height: 33px; background: var(--face); border: 1px solid; border-color: #fff #000 #000 #fff; box-shadow: inset -1px -1px var(--shade); font-size: 12px; }
.btn.default { border: 2px solid #000; border-top-width: 1px; border-left-width: 1px; box-shadow: inset 1px 1px #fff, inset -1px -1px var(--shade); }
.actions { display: flex; justify-content: flex-end; gap: 3px; padding: 6px 5px 5px; }
.actions .btn { width: 81px; }
.tools { display: flex; }
.tools button { display: flex; flex-direction: column; align-items: center; justify-content: flex-end; width: 57px; height: 48px; padding-bottom: 1px; background: var(--face); border: 1px solid; border-color: #fff #000 #000 #fff; box-shadow: inset -1px -1px var(--shade); font-size: 11px; line-height: 12px; }
.tools button.focus { border-color: #000; box-shadow: inset 1px 1px #fff, inset -1px -1px var(--shade); }
.tools button:disabled { color: var(--shade); text-shadow: 1px 1px #fff; }
.tools svg { width: 32px; height: 32px; }
.strip { margin-top: 2px; padding: 1px 0 2px 1px; border: solid #000; border-width: 1px 0 0 1px; background: var(--panel); }
fieldset { min-width: 0; margin: 0; padding: 4px 5px 5px; border: 1px solid var(--shade); }
legend { padding: 0 4px; font-size: 12px; line-height: 13px; }
fieldset select { width: 100%; }
select { height: 20px; padding: 0 20px 0 3px; border: 1px solid; border-width: 2px 1px 1px 2px; border-color: #222 #ddd #ddd #222; appearance: none; color: #000; background: #fff url("data:image/svg+xml,%3Csvg xmlns='http://www.w3.org/2000/svg' viewBox='0 0 16 17'%3E%3Cpath d='M0 0H16V17H0Z' fill='%23000'/%3E%3Cpath d='M0 0H15V16H0Z' fill='%23808080'/%3E%3Cpath d='M0 0H14V15H0Z' fill='%23fff'/%3E%3Cpath d='M1 1H14V15H1Z' fill='%23c0c0c0'/%3E%3Cpath d='M4 7H11L7.500 11Z'/%3E%3C/svg%3E") right top / 16px 17px no-repeat; }

/* list views */
.list { overflow: hidden; background: #fff; border: 1px solid; border-color: #000 #d8d8d8 #d8d8d8 #000; }
.list table { width: 100%; border-collapse: separate; border-spacing: 0; table-layout: fixed; }
.list th { height: 21px; padding: 0 5px; text-align: left; font-weight: normal; background: var(--face); border: 1px solid; border-color: #fff #000 #000 #fff; }
.list td { height: 17px; padding: 0 0 0 5px; line-height: 16px; border: 1px solid var(--face); border-width: 0 1px 1px 0; white-space: nowrap; overflow: hidden; }
.list td svg { float: left; width: 16px; height: 16px; margin-right: 1px; background: #fff; }
.list td:first-child:has(svg) { padding-left: 2px; }
.list .on td { background: var(--face); }
.list .on td.blank { background: #fff; }
.list .filler td { background: repeating-linear-gradient(transparent 0 16px, var(--face) 16px 17px); border-bottom: 0; }

/* forms */
.form { display: grid; grid-template-columns: 97px 1fr; gap: 1px 0; align-items: center; justify-items: start; }
.form label, .payment-side label { color: var(--shade); font-size: 11px; font-weight: bold; line-height: 14px; white-space: nowrap; }
.form input, .payment-side input { width: 100%; height: 21px; padding: 0 1px; border: 1px solid #000; background: #fff; font-weight: bold; }
.form select { font-weight: bold; height: 21px; }
.form .date { width: 127px; padding-left: 9px; font-weight: normal; }
.pair { display: flex; gap: 1px; width: 100%; }
.look { display: grid; place-items: center; width: 24px; height: 21px; background: var(--face); border: 1px solid; border-color: #fff #000 #000 #fff; }
.look svg { width: 17px; height: 17px; }
.form input.w-code, .payment-side .w-code { width: 129px; }
.form .w-short { width: 104px; }
.form .w-name { width: 180px; }
.form .w-card { width: 227px; }
.form .w-phone { width: 181px; }
.form input.tall { height: 24px; }

/* placed windows */
.msgbox { left: 175px; top: 554px; width: 332px; background: var(--face); }
.msg-row { display: flex; gap: 14px; align-items: center; padding: 13px 0 0 11px; font: 11px/14px var(--sys); white-space: nowrap; }
.msg-buttons { display: flex; justify-content: center; gap: 6px; padding: 16px 0 11px; }
.msg-buttons .btn { width: 75px; height: 23px; font: 11px/14px var(--sys); }

.accounts { left: 643px; top: 212px; width: 504px; background: var(--panel); padding-bottom: 13px; }
.accounts-top { display: flex; justify-content: space-between; align-items: flex-end; padding: 7px 8px 8px; }
.accounts .search { width: 213px; }
.accounts-top .tools button { width: 55px; height: 50px; }
.accounts-list { height: 369px; margin: 0 8px; }
.c-account { width: 268px; }
.c-id { width: 80px; }
.accounts-list .filler td { height: 300px; }

.user { left: 709px; top: 376px; width: 410px; }
.user .strip { border-bottom: 1px solid #fff; }
.user-form { margin-top: 3px; padding: 8px 12px 4px 9px; grid-template-columns: 90px 1fr; border: 1px solid; border-color: #000 var(--face) var(--face) #000; }
.user-form label { color: #000; }
.form.user-form .w-code { width: 127px; }

.browse { left: 544px; top: 5px; width: 598px; }
.browse-top { display: flex; align-items: flex-end; padding: 1px 4px 7px 1px; }
.browse .find { width: 279px; padding-right: 9px; }
.refresh { width: 73px; height: 35px; margin: 0 auto; }
.browse .search { width: 214px; }
.browse-list { height: 286px; margin: 0 6px 0 1px; }
.c-customer { width: 334px; }
.c-no { width: 107px; }
.c-act { width: 67px; }
.browse-list .filler td { height: 140px; }

.customer { left: 28px; top: 348px; width: 482px; }
.customer .strip { border-bottom: 4px solid #000; }
.customer-form { padding: 8px 8px 1px 14px; border: 1px solid; border-color: var(--shade) var(--face) var(--face) #000; }
.customer-form::after { content: ""; grid-column: 1 / -1; justify-self: stretch; height: 11px; margin: 1px -8px -1px -15px; background: #000; }
.customer-form .pair { align-items: center; gap: 24px; }
.customer-form .pair select { width: 98px; margin: 0 2px 0 auto; }

.method { left: 84px; top: 10px; width: 349px; }
.method .find { margin: 3px 1px 7px; padding-right: 10px; }
.method-list { height: 262px; margin: 0 4px 0 2px; }
.method-list .filler td { height: 200px; }
.method .actions { gap: 1px; padding-right: 3px; }
.method .btn { height: 36px; }

.tour { left: 476px; top: 8px; width: 668px; }
.tour .strip { margin-top: 0; border-bottom: 1px solid #fff; align-items: center; }
.tour .strip button { height: 50px; }
.tour .strip h3 { margin-left: 32px; font: bold 13px/14px var(--ui); }
.dark { background: #000; border-left: 1px solid #000; }
.dark label, .members h3 { color: #8a8a8a; }
.tour-form { display: flex; justify-content: space-between; align-items: flex-start; padding: 7px 12px 6px 7px; border-bottom: 1px solid #fff; }
.tour-form .form { grid-template-columns: 140px 307px; gap: 2px 0; }
.tour-form .form.side { grid-template-columns: 74px 115px; }
.tour-form .form input, .tour-form .look, .tour-form .form select { height: 20px; }
.tour-form .side .date { width: 115px; padding-left: 6px; }
.tour-form .w-name { width: 178px; }
.members { padding: 11px 7px 6px 2px; border-bottom: 2px solid #fff; }
.members h3 { padding: 0 0 7px 4px; font: bold 11px/14px var(--ui); }
.members-row { display: flex; gap: 5px; }
.members-list { width: 586px; height: 185px; border: 2px solid var(--face); font-size: 11px; }
.members-list th { height: 18px; padding: 0 4px; line-height: 14px; }
.members-list td { height: 14px; line-height: 13px; padding-left: 4px; }
.members-list td:first-child { padding-left: 2px; }
.members-list .filler td { height: 160px; background: repeating-linear-gradient(transparent 0 13px, var(--face) 13px 14px); }
.c-cid { width: 96px; }
.c-name { width: 187px; }
.c-addr { width: 163px; }
.c-phone { width: 96px; }
.members-buttons { display: grid; gap: 4px; align-content: start; padding-top: 14px; }
.members-buttons .btn { width: 60px; height: 22px; font-size: 11px; }
.totals { display: grid; grid-template-columns: 120px 91px; gap: 6px 0; padding: 6px 0 0 372px; }
.totals label { font-size: 11px; font-weight: bold; }
.totals input { height: 15px; padding: 0; border: 0; background: #fff; color: #000; text-align: right; font-size: 11px; font-weight: bold; }
.foot { height: 10px; }

.payment { left: 8px; top: 400px; width: 664px; }
.payment-form { display: flex; padding: 7px 8px 12px 10px; border: 1px solid; border-color: #000 var(--face) var(--face) #000; }
.payment-form .form { flex: none; grid-template-columns: 138px 310px; gap: 2px 0; }
.form .spaced { margin-top: 15px; }
.payment-side { flex: 1; min-width: 0; }
.payment-side p { display: flex; justify-content: flex-end; align-items: center; gap: 12px; }
.payment-side input { flex: none; }
.payment-side .actions { padding: 107px 0 0; gap: 6px; }
.payment footer { height: 29px; padding-left: 8px; background: #000; color: #2eea3c; font-weight: bold; line-height: 28px; }

/* taskbar */
.taskbar { display: flex; align-items: center; height: 25px; padding: 1px 0 2px 2px; font: 11px/16px var(--sys); white-space: nowrap; }
.taskbar svg { width: 16px; height: 16px; }
.start, .tasks button { display: flex; align-items: center; gap: 4px; height: 22px; border: 1px solid; border-color: #fff #000 #000 #fff; box-shadow: inset -1px -1px var(--shade); }
.start { width: 50px; padding-left: 2px; gap: 2px; font-weight: bold; }
.quick { display: flex; gap: 7px; align-items: center; width: 112px; padding-left: 8px; }
.quick span { margin-left: auto; padding-right: 6px; font-weight: bold; font-size: 14px; }
.tasks { display: grid; grid-template-columns: repeat(7, 1fr); gap: 3px; flex: 1; margin-right: 7px; }
.tasks button { min-width: 0; padding: 0 3px; overflow: hidden; }
.tray { display: flex; align-items: center; gap: 2px; width: 277px; height: 22px; padding: 0 7px 0 3px; border: 1px solid; border-color: var(--shade) #fff #fff var(--shade); }
.tray span { margin-left: auto; }
```
